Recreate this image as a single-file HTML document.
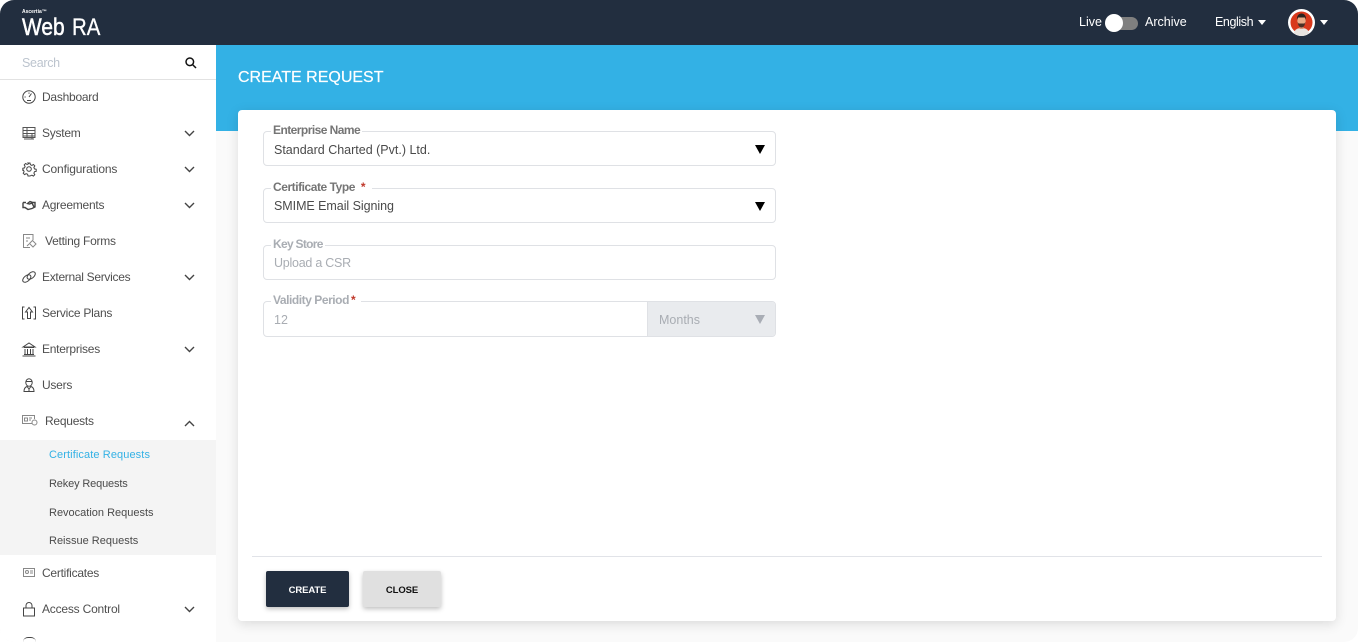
<!DOCTYPE html>
<html><head><meta charset="utf-8"><style>
*{box-sizing:border-box}
html,body{margin:0;padding:0;width:1358px;height:642px;overflow:hidden;background:#fff;font-family:"Liberation Sans",sans-serif}
#w{position:absolute;left:0;top:0;width:1358px;height:642px;overflow:hidden;background:#fafafa;border-radius:14px}
.a{position:absolute;white-space:nowrap}
.m{position:absolute;left:42px;font-size:12px;line-height:14px;color:#4f4f4f;white-space:nowrap;letter-spacing:-.25px}
.s{position:absolute;left:49px;font-size:11px;line-height:13px;color:#4a4a4a;white-space:nowrap}
svg{position:absolute;overflow:visible}
.ic{left:21px;width:16px;height:16px;fill:none;stroke:#444;stroke-width:1}
.ch{left:184px;width:11px;height:7px;fill:none;stroke:#444;stroke-width:1.4}
.f{position:absolute;left:263px;width:513px;border:1px solid #dfe1e5;border-radius:4px;background:#fff}
.l{position:absolute;font-size:12px;font-weight:bold;line-height:14px;color:#757575;background:#fff;padding:0 2px;white-space:nowrap;letter-spacing:-.55px}
.v{position:absolute;left:274px;font-size:12.5px;line-height:15px;color:#4a4a4a;white-space:nowrap}
.tri{position:absolute;left:755px;width:0;height:0;border-left:5px solid transparent;border-right:5px solid transparent;border-top:9px solid #000}
.g{color:#a9adb3}
</style></head><body><div id="w">

<div class="a" style="left:0;top:45px;width:216px;height:597px;background:#fff"></div>
<div class="a" style="left:216px;top:45px;width:1142px;height:86px;background:#33b1e5"></div>
<div class="a" style="left:0;top:0;width:1358px;height:45px;background:#222e3f"></div>

<div class="a" style="left:22px;top:9px;font-size:5px;line-height:6px;color:#fff;font-weight:bold">Ascertia™</div>
<div class="a" style="left:22px;top:15px;font-size:24px;line-height:26px;color:#fff;transform:scaleX(.87);transform-origin:0 0;-webkit-text-stroke:.5px #fff">Web</div>
<div class="a" style="left:72px;top:15px;font-size:24px;line-height:26px;color:#fff;transform:scaleX(.85);transform-origin:0 0;-webkit-text-stroke:.3px #fff">RA</div>

<div class="a" style="left:1079px;top:15px;font-size:12.5px;line-height:14px;color:#fff">Live</div>
<div class="a" style="left:1110px;top:17px;width:28px;height:13px;border-radius:7px;background:#7f7f7f"></div>
<div class="a" style="left:1105px;top:14px;width:18px;height:18px;border-radius:50%;background:#fff"></div>
<div class="a" style="left:1145px;top:15px;font-size:12.5px;line-height:14px;color:#fff">Archive</div>
<div class="a" style="left:1215px;top:15px;font-size:12.5px;line-height:14px;color:#fff;letter-spacing:-.4px">English</div>
<div class="a" style="left:1258px;top:20px;border-left:4px solid transparent;border-right:4px solid transparent;border-top:5px solid #fff"></div>
<svg style="left:1288px;top:9px;width:27px;height:27px" viewBox="0 0 27 27">
<circle cx="13.500" cy="13.500" r="13.500" fill="#fff"/><circle cx="13.500" cy="13.500" r="11" fill="#d8391c"/>
<path d="M6 24c1-4 4-5 7.500-5s6.500 1 7.500 5a11 11 0 0 1-15 0z" fill="#e8e4e0"/>
<rect x="11.500" y="15" width="4" height="5" fill="#d9987a"/>
<ellipse cx="13.500" cy="12" rx="4.200" ry="5.500" fill="#e8ac88"/>
<path d="M9 11c-.5-4.500 2-6.500 4.500-6.500s5 2 4.500 6.500l-1-2.500h-7z" fill="#2b2320"/>
<path d="M9.600 13c.5 4 2.200 5.500 3.900 5.500s3.400-1.500 3.900-5.500l-1 1.500h-5.800z" fill="#4a3026"/>
</svg>
<div class="a" style="left:1320px;top:20px;border-left:4px solid transparent;border-right:4px solid transparent;border-top:5px solid #fff"></div>

<div class="a" style="left:22px;top:56px;font-size:12.5px;line-height:15px;color:#bcc4ce;letter-spacing:-.3px">Search</div>
<svg style="left:185px;top:57px;width:12px;height:12px" viewBox="0 0 12 12" fill="none" stroke="#111" stroke-width="1.500"><circle cx="4.800" cy="4.800" r="3.800"/><path d="M7.600 7.600L11 11"/></svg>
<div class="a" style="left:0;top:79px;width:216px;height:1px;background:#e2e2e2"></div>

<div class="a" style="left:0;top:440px;width:216px;height:115px;background:#f4f4f4"></div>

<svg class="ic" style="top:89px" viewBox="0 0 16 16"><circle cx="8" cy="8" r="6.200"/><path d="M8 8l2.500-3.500M3.500 8h1.200M8 3.500v1.200M6 11.500h4"/></svg>
<div class="m" style="top:90px">Dashboard</div>

<svg class="ic" style="top:125px;stroke:#555" viewBox="0 0 16 16"><path d="M2 2.500h12v10H2zM2 5.500h12M2 8.500h12M2 11h12M6 2.500v10M11 8.500V14M3 14h10"/></svg>
<div class="m" style="top:126px">System</div>
<svg class="ch" style="top:130px" viewBox="0 0 11 7"><path d="M1 1l4.500 4.500L10 1"/></svg>

<svg class="ic" style="top:161px" viewBox="0 0 16 16"><circle cx="8" cy="8" r="2.300"/><path d="M7 2h2l.4 1.700 1.500.7 1.500-.9 1.400 1.400-.9 1.500.6 1.500 1.700.4v2l-1.700.4-.6 1.500.9 1.500-1.400 1.400-1.500-.9-1.500.6L9 15H7l-.4-1.700-1.500-.6-1.500.9-1.400-1.400.9-1.500-.6-1.500L1.800 9.300v-2l1.700-.4.6-1.500-.9-1.500 1.400-1.400 1.500.9 1.500-.7z"/></svg>
<div class="m" style="top:162px;letter-spacing:-.15px">Configurations</div>
<svg class="ch" style="top:166px" viewBox="0 0 11 7"><path d="M1 1l4.500 4.500L10 1"/></svg>

<svg class="ic" style="top:197px;stroke-width:1.400" viewBox="0 0 16 16"><path d="M2 5.500v5h2l3 2 4-1 3-1.500V5.500h-2L9 4.500 6.500 6.500l2 .5 2.500-1 2 4M2 5.500h3"/></svg>
<div class="m" style="top:198px">Agreements</div>
<svg class="ch" style="top:202px" viewBox="0 0 11 7"><path d="M1 1l4.500 4.500L10 1"/></svg>

<svg class="ic" style="left:22px;top:233px;stroke:#888" viewBox="0 0 16 16"><path d="M11 7V1.500H1.500v13H8M4 5h4M4 8h2"/><path d="M7.500 10.500l3-3 3.500 3.500-3 3z M5 13l2-2"/></svg>
<div class="m" style="left:45px;top:234px">Vetting Forms</div>

<svg class="ic" style="top:269px" viewBox="0 0 16 16"><ellipse cx="5.800" cy="9.500" rx="4.800" ry="2.800" transform="rotate(-40 5.800 9.500)"/><ellipse cx="10.200" cy="6.500" rx="4.800" ry="2.800" transform="rotate(-40 10.200 6.500)"/></svg>
<div class="m" style="top:270px;letter-spacing:-.3px">External Services</div>
<svg class="ch" style="top:274px" viewBox="0 0 11 7"><path d="M1 1l4.500 4.500L10 1"/></svg>

<svg class="ic" style="top:305px" viewBox="0 0 16 16"><path d="M3.500 2H1.500v12h2M12.500 2h2v12h-2M4.500 7L8 2.500 11.500 7H9.500v6.500h-3V7z"/></svg>
<div class="m" style="top:306px">Service Plans</div>

<svg class="ic" style="top:341px" viewBox="0 0 16 16"><path d="M2 6l6-4 6 4zM3 6.500h10M4 8v5M6.500 8v5M9.500 8v5M12 8v5M3 13.500h10M1.500 15h13"/></svg>
<div class="m" style="top:342px">Enterprises</div>
<svg class="ch" style="top:346px" viewBox="0 0 11 7"><path d="M1 1l4.500 4.500L10 1"/></svg>

<svg class="ic" style="top:377px" viewBox="0 0 16 16"><ellipse cx="8" cy="5.500" rx="3.200" ry="3.800"/><path d="M4.800 4.500h6.400M3 14.500c0-3 1.500-4.500 3-5l2 2.500 2-2.500c1.500.5 3 2 3 5zM8 12v2.500"/></svg>
<div class="m" style="top:378px">Users</div>

<svg class="ic" style="left:21px;top:413px;width:18px;stroke:#888" viewBox="0 0 18 16"><path d="M11 10.500H1.500v-8h12V6M3.500 5h3v3h-3zM8 5h3M8 7h2"/><circle cx="13.500" cy="9.500" r="2.500"/></svg>
<div class="m" style="left:45px;top:414px">Requests</div>
<svg class="ch" style="top:420px" viewBox="0 0 11 7"><path d="M1 6l4.500-4.500L10 6"/></svg>

<div class="s" style="top:448.500px;color:#33b1e5;letter-spacing:.1px">Certificate Requests</div>
<div class="s" style="top:477.500px;letter-spacing:-.15px">Rekey Requests</div>
<div class="s" style="top:506.500px">Revocation Requests</div>
<div class="s" style="top:534.500px">Reissue Requests</div>

<svg class="ic" style="top:565px;stroke:#888" viewBox="0 0 16 16"><path d="M2.500 3.500h11v8h-11zM9 6h3M9 8h3"/><circle cx="6" cy="7" r="1.500"/></svg>
<div class="m" style="top:566px">Certificates</div>

<svg class="ic" style="top:601px" viewBox="0 0 16 16"><path d="M2.500 7h11v8h-11zM5 7V4.500a3 3 0 0 1 6 0V7"/></svg>
<div class="m" style="top:602px;letter-spacing:-.2px">Access Control</div>
<svg class="ch" style="top:606px" viewBox="0 0 11 7"><path d="M1 1l4.500 4.500L10 1"/></svg>
<div class="a" style="left:23px;top:637px;width:13px;height:5px;border-top:1px solid #444;border-radius:5px 5px 0 0"></div>

<div class="a" style="left:238px;top:68px;font-size:16px;line-height:20px;color:#fff;-webkit-text-stroke:.2px #fff">CREATE REQUEST</div>

<div class="a" style="left:238px;top:110px;width:1098px;height:511px;background:#fff;border-radius:4px;box-shadow:0 3px 12px rgba(0,0,0,.13)"></div>

<div class="f" style="top:131px;height:35px"></div>
<div class="l" style="left:271px;top:123px">Enterprise Name</div>
<div class="v" style="top:143px">Standard Charted (Pvt.) Ltd.</div>
<div class="tri" style="top:145px"></div>

<div class="f" style="top:188px;height:35px"></div>
<div class="l" style="left:271px;top:180px;padding-right:7px;letter-spacing:-.45px">Certificate Type <span style="color:#c0392b;margin-left:3px">*</span></div>
<div class="v" style="top:199px;letter-spacing:-.05px">SMIME Email Signing</div>
<div class="tri" style="top:202px"></div>

<div class="f" style="top:245px;height:35px"></div>
<div class="l g" style="left:271px;top:237px;letter-spacing:-.7px">Key Store</div>
<div class="v g" style="top:256px;letter-spacing:-.25px">Upload a CSR</div>

<div class="f" style="top:301px;height:36px;overflow:hidden"><div class="a" style="left:383px;top:0;width:129px;height:36px;background:#e9ebee;border-left:1px solid #dfe1e5"></div></div>
<div class="l g" style="left:271px;top:293px;padding-right:6px;letter-spacing:-.45px">Validity Period<span style="color:#c0392b;margin-left:2px">*</span></div>
<div class="v g" style="top:313px">12</div>
<div class="v g" style="left:659px;top:313px">Months</div>
<div class="tri" style="top:315px;border-top-color:#a9adb5"></div>

<div class="a" style="left:252px;top:556px;width:1070px;height:1px;background:#e1e3e8"></div>
<div class="a" style="left:266px;top:571px;width:83px;height:36px;background:#222e3f;border-radius:2px;box-shadow:0 2px 5px rgba(0,0,0,.25);color:#fff;font-size:9.500px;font-weight:bold;line-height:39px;text-align:center;letter-spacing:-.1px">CREATE</div>
<div class="a" style="left:363px;top:571px;width:78px;height:36px;background:#e0e0e0;border-radius:2px;box-shadow:0 2px 5px rgba(0,0,0,.25);color:#111;font-size:9.500px;font-weight:bold;line-height:39px;text-align:center;letter-spacing:-.1px">CLOSE</div>

</div></body></html>
